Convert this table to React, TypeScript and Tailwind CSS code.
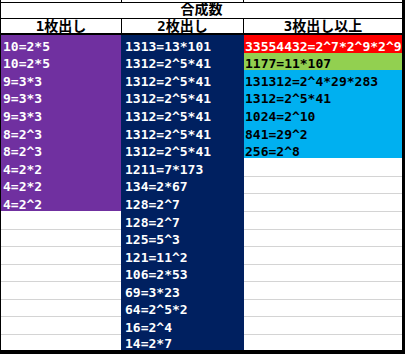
import React from 'react';

const font = "font-['DejaVu_Sans_Mono','Noto_Sans_CJK_JP',monospace]";

// row heights of the 18 data rows (excel rows are ~17.5px)
const rowH = [
    'h-[18px]', 'h-[17px]', 'h-[18px]', 'h-[17px]', 'h-[18px]', 'h-[18px]',
    'h-[17px]', 'h-[18px]', 'h-[17px]', 'h-[18px]', 'h-[18px]', 'h-[17px]',
    'h-[18px]', 'h-[17px]', 'h-[18px]', 'h-[17px]', 'h-[18px]', 'h-[16px]',
];

const col1 = ['10=2*5', '10=2*5', '9=3*3', '9=3*3', '9=3*3', '8=2^3', '8=2^3', '4=2*2', '4=2*2', '4=2^2'];

const col2 = [
    '1313=13*101', '1312=2^5*41', '1312=2^5*41', '1312=2^5*41', '1312=2^5*41', '1312=2^5*41',
    '1312=2^5*41', '1211=7*173', '134=2*67', '128=2^7', '128=2^7', '125=5^3',
    '121=11^2', '106=2*53', '69=3*23', '64=2^5*2', '16=2^4', '14=2*7',
];

const col3 = [
    { t: '33554432=2^7*2^9*2^9', c: 'bg-[#ff0000] text-white' },
    { t: '1177=11*107', c: 'bg-[#92d050] text-black' },
    { t: '131312=2^4*29*283', c: 'bg-[#00b0f0] text-black' },
    { t: '1312=2^5*41', c: 'bg-[#00b0f0] text-black' },
    { t: '1024=2^10', c: 'bg-[#00b0f0] text-black' },
    { t: '841=29^2', c: 'bg-[#00b0f0] text-black' },
    { t: '256=2^8', c: 'bg-[#00b0f0] text-black' },
];

const Cell = ({ text, className }: { text?: string; className: string }) => (
    <div className={`flex items-end overflow-hidden whitespace-nowrap leading-[13px] ${className}`}>
        {text}
    </div>
);

const App = () => {
    return (
        <div className={`w-[405px] h-[354px] bg-white border-l border-r-[3px] border-b-[4px] border-black overflow-hidden text-[13px] font-bold ${font}`}>
            {/* bit of the row above */}
            <div className="grid grid-cols-[120px_123px_158px] h-[2px]">
                <div />
                <div className="border-x border-black" />
                <div />
            </div>
            <div className="flex justify-center items-end h-[16px] pb-[2px] border-t border-black leading-[13px] text-[14px] text-black">合成数</div>
            <div className="grid grid-cols-[120px_123px_158px] h-[17px] border-t border-b-2 border-black text-[14px] text-black">
                <div className="flex justify-center items-end leading-[13px]">1枚出し</div>
                <div className="flex justify-center items-end leading-[13px] border-x border-black">2枚出し</div>
                <div className="flex justify-center items-end leading-[13px]">3枚出し以上</div>
            </div>
            <div className="flex flex-col">
                {rowH.map((h, r) => (
                    <div key={r} className={`grid grid-cols-[120px_123px_158px] ${h}`}>
                        {r < col1.length ? (
                            <Cell text={col1[r]} className="pl-[2px] bg-[#7030a0] text-white" />
                        ) : (
                            <Cell className={r > col1.length ? 'border-t border-[#d4d4d4]' : ''} />
                        )}
                        <Cell text={col2[r]} className="pl-[4px] bg-[#002060] text-white" />
                        {r < col3.length ? (
                            <Cell text={col3[r].t} className={`pl-[1px] ${col3[r].c}`} />
                        ) : (
                            <Cell className={r > col3.length ? 'border-t border-[#d4d4d4]' : ''} />
                        )}
                    </div>
                ))}
            </div>
        </div>
    );
};

export default App;
